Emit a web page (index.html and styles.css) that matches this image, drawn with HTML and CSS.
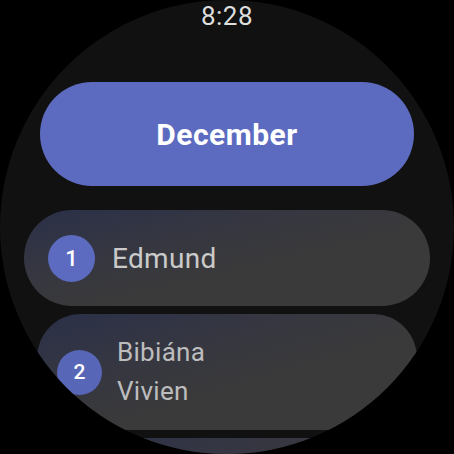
FILE: index.html
```html
<!DOCTYPE html>
<html lang="en">
<head>
    <meta charset="UTF-8">
    <meta name="viewport" content="width=device-width, initial-scale=1.0">
    <title>Playlist</title>
    <link rel="stylesheet" href="styles.css">
</head>
<body>

    <!-- Round watch screen -->
    <div class="face">
        <div class="time">8:28</div>

        <button class="month-button">December</button>

        <div class="chip">
            <span class="badge">1</span>
            <span class="chip-label">Edmund</span>
        </div>

        <div class="chip chip-small">
            <span class="badge">2</span>
            <span class="chip-label">Bibiána<br>Vivien</span>
        </div>

        <div class="chip chip-next"></div>
    </div>

</body>
</html>
```

FILE: styles.css
```css
body {
    font-family: Roboto, "Noto Sans", sans-serif;
    background-color: #000;
    margin: 0;
    padding: 0;
    width: 454px;
    height: 454px;
    overflow: hidden;
}

.face {
    width: 454px;
    height: 454px;
    border-radius: 50%;
    background-color: #111;
    overflow: hidden;
    display: flex;
    flex-direction: column;
    align-items: center;
}

.time {
    padding-top: 1px;
    font-size: 26px;
    line-height: 31px;
    letter-spacing: 0.5px;
    color: #dedede;
}

.month-button {
    margin-top: 50px;
    width: 374px;
    height: 104px;
    flex-shrink: 0;
    border: none;
    border-radius: 52px;
    background-color: #5c6bc0;
    color: #fff;
    font-family: Roboto, sans-serif;
    font-size: 30px;
    font-weight: bold;
    letter-spacing: 0.5px;
}

.chip {
    margin-top: 24px;
    width: 406px;
    height: 96px;
    flex-shrink: 0;
    box-sizing: border-box;
    border-radius: 48px;
    background: linear-gradient(to bottom right, #2b3049 0%, #363740 35%, #3a3a3a 60%);
    display: flex;
    align-items: center;
    padding-left: 24px;
    gap: 17px;
}

.badge {
    width: 47px;
    height: 47px;
    flex-shrink: 0;
    border-radius: 50%;
    background-color: #5c6bc0;
    color: #fff;
    font-size: 22px;
    font-weight: 500;
    display: flex;
    align-items: center;
    justify-content: center;
}

.chip-label {
    font-size: 28px;
    letter-spacing: 0.3px;
    color: #cacaca;
}

.chip-small {
    margin-top: 8px;
    width: 380px;
    height: 116px;
    border-radius: 44px;
    padding-left: 20px;
    gap: 15px;
}

.chip-small .badge {
    width: 45px;
    height: 45px;
    font-size: 21px;
    background-color: #5866b8;
}

.chip-small .chip-label {
    font-size: 26px;
    line-height: 39px;
    color: #bdbdbd;
}

.chip-next {
    margin-top: 8px;
    width: 360px;
    height: 100px;
}
```
